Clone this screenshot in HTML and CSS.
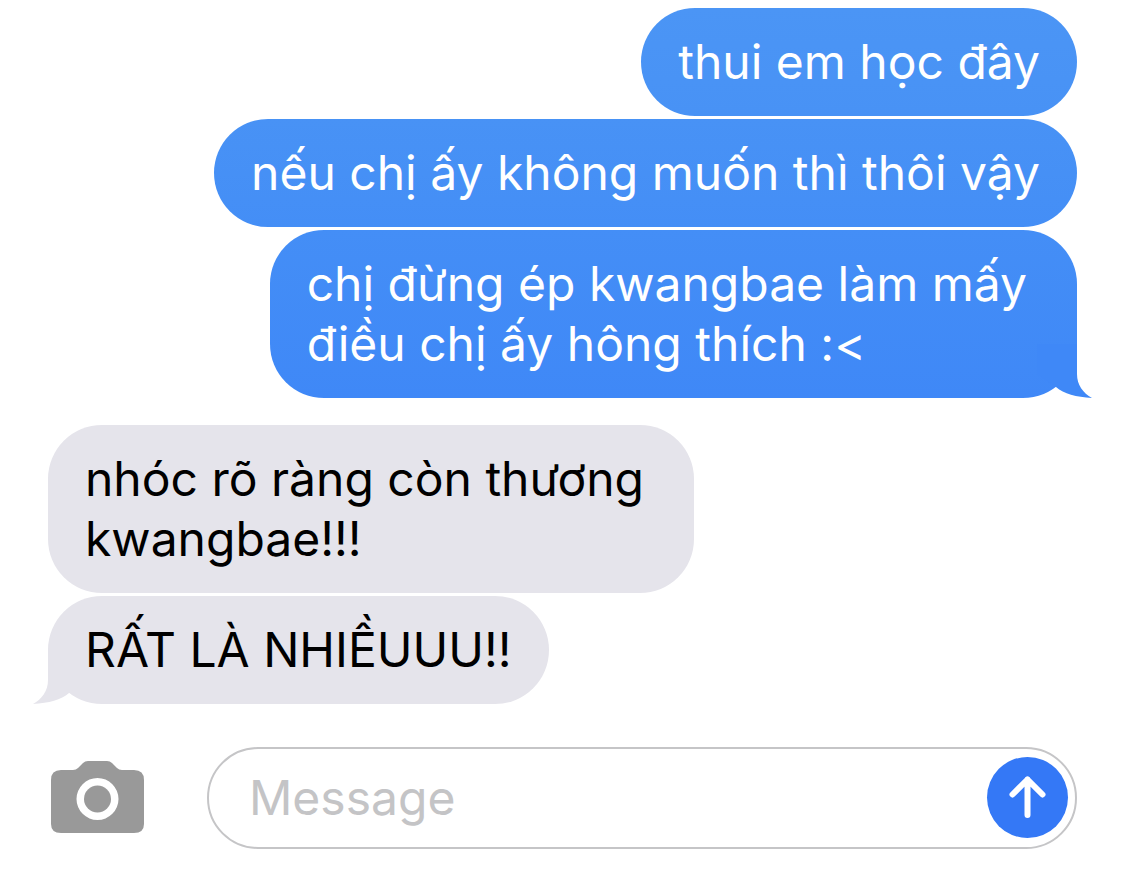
FILE: index.html
```html
<!DOCTYPE html>
<html lang="vi">
<head>
<meta charset="utf-8">
<meta name="viewport" content="width=device-width, initial-scale=1">
<title>Messages</title>
<link rel="stylesheet" href="styles.css">
</head>
<body>
<main class="chat">
  <section class="group sent">
    <p class="bubble shade-1">thui em học đây</p>
    <p class="bubble shade-2">nếu chị ấy không muốn thì thôi vậy</p>
    <p class="bubble wrapped shade-3">chị đừng ép kwangbae làm mấy<br>điều chị ấy hông thích :&lt;
      <svg class="tail" viewBox="0 0 55 54" aria-hidden="true"><path d="M40 0V30C40 41 46 49 55 54C39 53 27 50 19 43L0 30V0Z"/></svg>
    </p>
  </section>
  <section class="group received">
    <p class="bubble wrapped">nhóc rõ ràng còn thương<br>kwangbae!!!</p>
    <p class="bubble">RẤT LÀ NHIỀUUU!!
      <svg class="tail" viewBox="0 0 55 54" aria-hidden="true"><path d="M15 0V30C15 41 9 49 0 54C16 53 28 50 36 43L55 30V0Z"/></svg>
    </p>
  </section>
</main>
<form class="composer">
  <button class="camera" type="button" aria-label="Camera">
    <svg viewBox="0 0 93 72" aria-hidden="true">
      <path fill-rule="evenodd" d="M10 9H22Q25 9 27 7L32 2Q34 0 37 0H56Q59 0 61 2L66 7Q68 9 71 9H83Q93 9 93 19V63Q93 72 83 72H10Q0 72 0 63V19Q0 9 10 9ZM46.500 17a21 21 0 1 0 0 42a21 21 0 1 0 0-42Z"/>
      <circle cx="46.500" cy="38" r="13.500"/>
    </svg>
  </button>
  <div class="field">
    <input class="message" type="text" placeholder="Message" aria-label="Message">
    <button class="send" type="button" aria-label="Send">
      <svg viewBox="0 0 81 81" aria-hidden="true"><path d="M40.500 22.500V58M25.500 37.500L40.500 22.500L55.500 37.500"/></svg>
    </button>
  </div>
</form>
</body>
</html>
```

FILE: styles.css
```css
* {
  box-sizing: border-box;
}

body {
  margin: 0;
  background: #fff;
  color: #000;
  font-family: Inter, "Noto Sans", sans-serif;
  font-size: 48px;
  line-height: 60px;
}

.chat {
  display: flex;
  flex-direction: column;
  gap: 27px;
  padding: 8px 48px 43px;
}

.group {
  display: flex;
  flex-direction: column;
  gap: 3px;
}

.sent {
  align-items: flex-end;
  color: #fff;
}

.received {
  align-items: flex-start;
}

.bubble {
  position: relative;
  margin: 0;
  padding: 24px 37px;
  border-radius: 54px;
  background: #e5e4eb;
}

.wrapped {
  padding-right: 50px;
}

.shade-1 {
  background: linear-gradient(#4b95f5, #4892f5);
}

.shade-2 {
  background: linear-gradient(#4892f5, #448ef6);
}

.shade-3 {
  background: linear-gradient(#448ef6, #3f88f7);
}

.tail {
  position: absolute;
  bottom: 0;
  width: 55px;
  height: 54px;
}

.sent .tail {
  right: -15px;
  fill: #3f88f7;
}

.received .tail {
  left: -15px;
  fill: #e5e4eb;
}

.composer {
  display: flex;
  align-items: center;
  gap: 63px;
  padding: 0 48px 40px 51px;
}

button {
  flex: none;
  padding: 0;
  border: 0;
  background: none;
}

button svg {
  display: block;
  width: 100%;
}

.camera {
  width: 93px;
  padding-bottom: 2px;
  fill: #999;
}

.field {
  flex: 1;
  display: flex;
  align-items: center;
  min-width: 0;
  height: 102px;
  padding: 0 7px 1px 40px;
  border: 2px solid #c5c5c7;
  border-radius: 51px;
}

.message {
  flex: 1;
  min-width: 0;
  height: 62px;
  padding: 0;
  border: 0;
  outline: 0;
  background: none;
  color: #000;
  font: inherit;
}

.message::placeholder {
  color: #c4c4c6;
  opacity: 1;
}

.send {
  width: 81px;
  height: 81px;
  border-radius: 50%;
  background: #3478f6;
}

.send path {
  fill: none;
  stroke: #fff;
  stroke-width: 6;
  stroke-linecap: round;
  stroke-linejoin: round;
}
```
